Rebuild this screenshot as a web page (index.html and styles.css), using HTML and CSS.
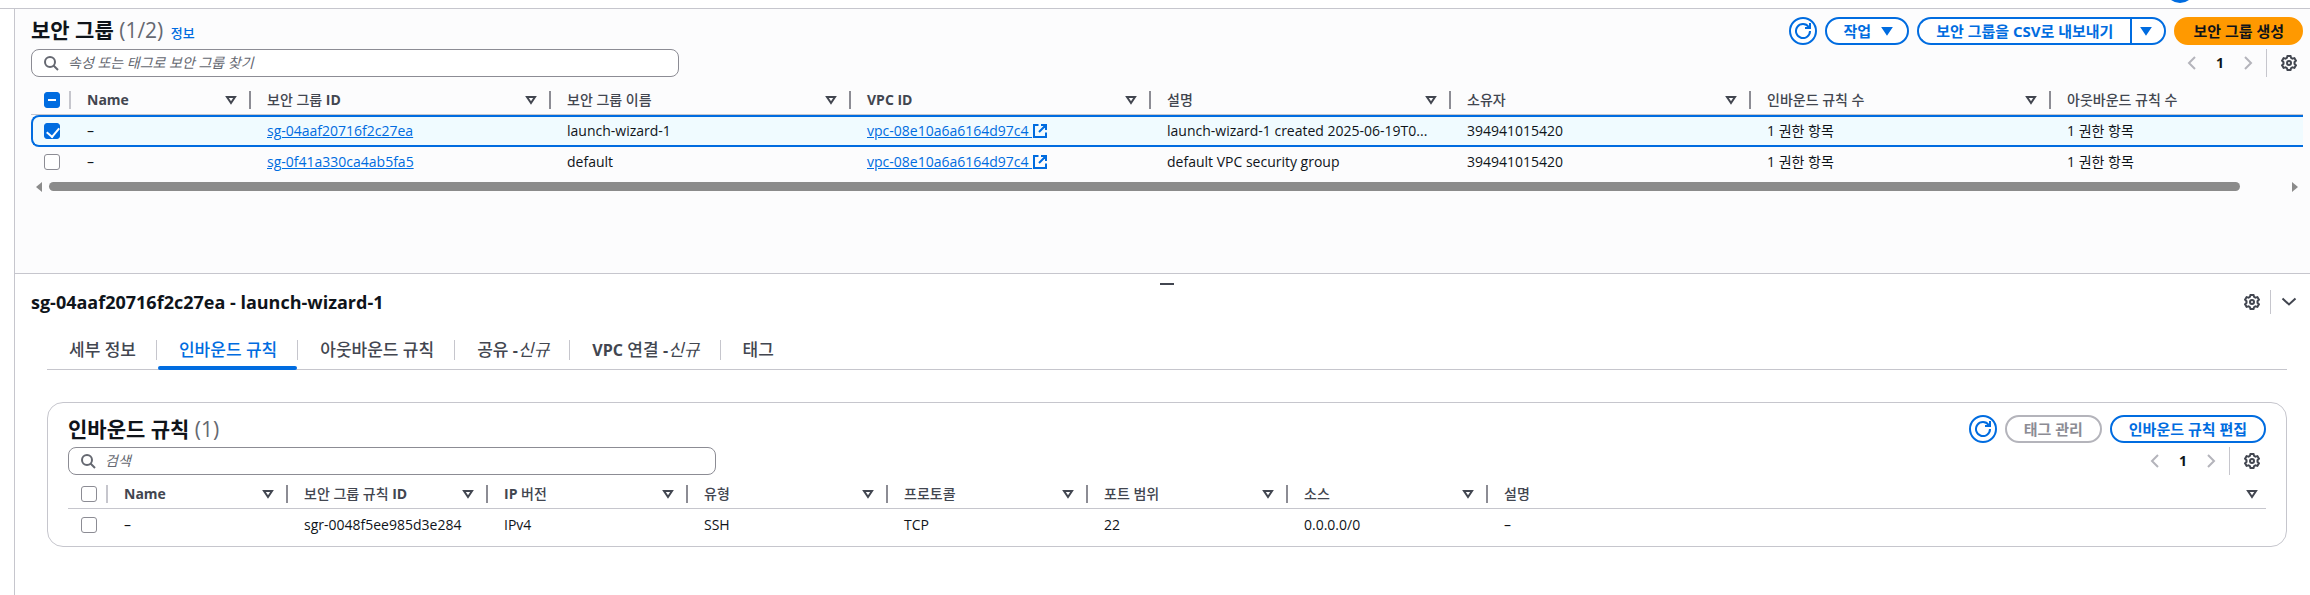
FILE: index.html
```
<!DOCTYPE html>
<html lang="ko">
<head>
<meta charset="utf-8">
<title>보안 그룹</title>
<link rel="stylesheet" href="styles.css">
</head>
<body>
<svg class="sprite" aria-hidden="true">
  <symbol id="refresh" viewBox="0 0 16 16"><path d="M10 5h5V0"/><path d="M15 8a7 7 0 1 1-1.300-4"/></symbol>
  <symbol id="caret" viewBox="0 0 16 16"><path class="solid" d="M4 5h8l-4 6z"/></symbol>
  <symbol id="filter" viewBox="0 0 16 16"><path d="M4 5h8l-4 6z"/></symbol>
  <symbol id="search" viewBox="0 0 16 16"><circle cx="7" cy="7" r="5"/><path d="m15 15-4.500-4.500"/></symbol>
  <symbol id="left" viewBox="0 0 16 16"><path d="M11 2 5 8l6 6"/></symbol>
  <symbol id="right" viewBox="0 0 16 16"><path d="m5 2 6 6-6 6"/></symbol>
  <symbol id="down" viewBox="0 0 16 16"><path d="m1.500 4.500 6.500 6 6.500-6"/></symbol>
  <symbol id="external" viewBox="0 0 16 16"><path d="M9 2h5v5M7 9l7-7M14 9.500V14H2V2h4.500"/></symbol>
  <symbol id="gear" viewBox="0 0 16 16"><path d="M6.500 1h3l.6 1.900 1.300.7 2-.5 1.500 2.600-1.400 1.500v1.600l1.400 1.500-1.500 2.600-2-.5-1.300.7-.6 1.900h-3l-.6-1.900-1.300-.7-2 .5-1.500-2.600 1.400-1.500V7.200L1.100 5.700l1.500-2.600 2 .5 1.300-.7z"/><circle cx="8" cy="8" r="2"/></symbol>
</svg>

<div class="app">
  <header class="topbar"><span class="help-dot"></span></header>
  <main class="shell">
    <section class="groups">
      <div class="head">
        <h1 class="title">보안 그룹 <span class="count">(1/2)</span> <a class="info" href="#">정보</a></h1>
        <div class="actions">
          <button class="btn round" aria-label="새로 고침"><svg class="icon"><use href="#refresh"/></svg></button>
          <button class="btn menu">작업 <svg class="icon"><use href="#caret"/></svg></button>
          <div class="split">
            <button class="btn split-main">보안 그룹을 CSV로 내보내기</button>
            <button class="btn split-more" aria-label="더 보기"><svg class="icon"><use href="#caret"/></svg></button>
          </div>
          <button class="btn primary">보안 그룹 생성</button>
        </div>
      </div>
      <div class="tools">
        <label class="search"><svg class="icon"><use href="#search"/></svg><input type="text" aria-label="보안 그룹 찾기" placeholder="속성 또는 태그로 보안 그룹 찾기"></label>
        <div class="pager">
          <button class="plain off" aria-label="이전"><svg class="icon"><use href="#left"/></svg></button>
          <button class="plain page">1</button>
          <button class="plain off" aria-label="다음"><svg class="icon"><use href="#right"/></svg></button>
          <button class="plain prefs" aria-label="기본 설정"><svg class="icon"><use href="#gear"/></svg></button>
        </div>
      </div>
      <div class="clip">
        <table class="grid wide">
          <colgroup><col class="c-check"><col class="c-name"><col span="7" class="c-wide"></colgroup>
          <thead><tr>
            <th><input class="check some" type="checkbox" aria-label="모두 선택"></th>
            <th><div><span><b>Name</b></span><svg class="icon"><use href="#filter"/></svg></div></th>
            <th><div><span>보안 그룹 <b>ID</b></span><svg class="icon"><use href="#filter"/></svg></div></th>
            <th><div><span>보안 그룹 이름</span><svg class="icon"><use href="#filter"/></svg></div></th>
            <th><div><span><b>VPC ID</b></span><svg class="icon"><use href="#filter"/></svg></div></th>
            <th><div><span>설명</span><svg class="icon"><use href="#filter"/></svg></div></th>
            <th><div><span>소유자</span><svg class="icon"><use href="#filter"/></svg></div></th>
            <th><div><span>인바운드 규칙 수</span><svg class="icon"><use href="#filter"/></svg></div></th>
            <th><div><span>아웃바운드 규칙 수</span></div></th>
          </tr></thead>
          <tbody>
            <tr class="selected">
              <td><input class="check" type="checkbox" checked aria-label="launch-wizard-1 선택"></td>
              <td>–</td><td><a href="#">sg-04aaf20716f2c27ea</a></td><td>launch-wizard-1</td>
              <td><a href="#">vpc-08e10a6a6164d97c4 <svg class="icon"><use href="#external"/></svg></a></td>
              <td>launch-wizard-1 created 2025-06-19T0...</td><td>394941015420</td><td>1 권한 항목</td><td>1 권한 항목</td>
            </tr>
            <tr>
              <td><input class="check" type="checkbox" aria-label="default 선택"></td>
              <td>–</td><td><a href="#">sg-0f41a330ca4ab5fa5</a></td><td>default</td>
              <td><a href="#">vpc-08e10a6a6164d97c4 <svg class="icon"><use href="#external"/></svg></a></td>
              <td>default VPC security group</td><td>394941015420</td><td>1 권한 항목</td><td>1 권한 항목</td>
            </tr>
          </tbody>
        </table>
      </div>
      <div class="scroll"><i class="arrow back"></i><div class="track"><div class="thumb"></div></div><i class="arrow next"></i></div>
    </section>

    <section class="panel">
      <div class="handle"></div>
      <div class="panel-head">
        <h2>sg-04aaf20716f2c27ea - launch-wizard-1</h2>
        <div class="panel-tools">
          <button class="plain" aria-label="기본 설정"><svg class="icon"><use href="#gear"/></svg></button>
          <button class="plain fold" aria-label="닫기"><svg class="icon"><use href="#down"/></svg></button>
        </div>
      </div>
      <div class="tabs" role="tablist">
        <button role="tab">세부 정보</button>
        <button role="tab" class="active" aria-selected="true">인바운드 규칙</button>
        <button role="tab">아웃바운드 규칙</button>
        <button role="tab">공유 <b>-</b><em>신규</em></button>
        <button role="tab"><b>VPC</b> 연결 <b>-</b><em>신규</em></button>
        <button role="tab">태그</button>
      </div>
      <div class="card">
        <div class="head">
          <h2 class="title">인바운드 규칙 <span class="count">(1)</span></h2>
          <div class="actions">
            <button class="btn round" aria-label="새로 고침"><svg class="icon"><use href="#refresh"/></svg></button>
            <button class="btn disabled" disabled>태그 관리</button>
            <button class="btn">인바운드 규칙 편집</button>
          </div>
        </div>
        <div class="tools">
          <label class="search"><svg class="icon"><use href="#search"/></svg><input type="text" aria-label="검색" placeholder="검색"></label>
          <div class="pager">
            <button class="plain off" aria-label="이전"><svg class="icon"><use href="#left"/></svg></button>
            <button class="plain page">1</button>
            <button class="plain off" aria-label="다음"><svg class="icon"><use href="#right"/></svg></button>
            <button class="plain prefs" aria-label="기본 설정"><svg class="icon"><use href="#gear"/></svg></button>
          </div>
        </div>
        <table class="grid">
          <colgroup><col class="c-check"><col class="c-name"><col span="6" class="c-mid"><col></colgroup>
          <thead><tr>
            <th><input class="check" type="checkbox" aria-label="모두 선택"></th>
            <th><div><span><b>Name</b></span><svg class="icon"><use href="#filter"/></svg></div></th>
            <th><div><span>보안 그룹 규칙 <b>ID</b></span><svg class="icon"><use href="#filter"/></svg></div></th>
            <th><div><span><b>IP</b> 버전</span><svg class="icon"><use href="#filter"/></svg></div></th>
            <th><div><span>유형</span><svg class="icon"><use href="#filter"/></svg></div></th>
            <th><div><span>프로토콜</span><svg class="icon"><use href="#filter"/></svg></div></th>
            <th><div><span>포트 범위</span><svg class="icon"><use href="#filter"/></svg></div></th>
            <th><div><span>소스</span><svg class="icon"><use href="#filter"/></svg></div></th>
            <th><div><span>설명</span><svg class="icon"><use href="#filter"/></svg></div></th>
          </tr></thead>
          <tbody><tr>
            <td><input class="check" type="checkbox" aria-label="규칙 선택"></td>
            <td>–</td><td>sgr-0048f5ee985d3e284</td><td>IPv4</td><td>SSH</td><td>TCP</td><td>22</td><td>0.0.0.0/0</td><td>–</td>
          </tr></tbody>
        </table>
      </div>
    </section>
  </main>
</div>
</body>
</html>
```
FILE: styles.css
```
:root {
  --blue: #006ce0;
  --line: #c6c6cd;
  --ink: #0f141a;
  --muted: #424650;
}
* { box-sizing: border-box; }
body {
  margin: 0;
  background: #fff;
  color: var(--ink);
  font: 14px/20px "Open Sans", "Noto Sans CJK KR", sans-serif;
}
h1, h2 { margin: 0; }
b { font-weight: 700; }
button, input { font: inherit; color: inherit; margin: 0; }
button { background: none; border: 0; padding: 0; }
a { color: var(--blue); }
.sprite { position: absolute; width: 0; height: 0; }
.icon {
  width: 16px;
  height: 16px;
  flex: none;
  fill: none;
  stroke: currentColor;
  stroke-width: 2;
  overflow: visible;
}
.solid { fill: currentColor; }

.app { display: flex; flex-direction: column; min-height: 100vh; }
.topbar { height: 9px; border-bottom: 1px solid var(--line); position: relative; }
.help-dot {
  position: absolute;
  right: 115px;
  bottom: 5px;
  width: 30px;
  height: 30px;
  border-radius: 50%;
  background: var(--blue);
}
.shell {
  flex: 1;
  display: flex;
  flex-direction: column;
  margin-left: 14px;
  border-left: 1px solid var(--line);
}
.groups { background: #fcfcfd; padding: 8px 7px 82px 16px; }
.head { display: flex; justify-content: space-between; align-items: center; height: 28px; }
.title { font-size: 21px; line-height: 24px; font-weight: 700; }
.count { font-weight: 400; color: #656871; }
.info { font-size: 13px; font-weight: 500; text-decoration: none; margin-left: 2px; }
.actions { display: flex; gap: 8px; }
.btn {
  display: flex;
  align-items: center;
  gap: 8px;
  height: 28px;
  padding: 0 17px;
  border: 2px solid var(--blue);
  border-radius: 14px;
  background: #fff;
  color: var(--blue);
  font-size: 15px;
  font-weight: 700;
}
.btn.round { width: 28px; padding: 0; justify-content: center; }
.btn.menu { padding-right: 12px; }
.btn.primary { background: #f90; border-color: #f90; color: var(--ink); }
.btn.disabled { border-color: #b4b4bb; color: #8c8c94; }
.split { display: flex; }
.btn.split-main { border-radius: 14px 0 0 14px; border-right: 0; }
.btn.split-more { border-radius: 0 14px 14px 0; padding: 0 10px 0 6px; }

.tools { display: flex; justify-content: space-between; margin-top: 4px; height: 28px; }
.search {
  display: flex;
  align-items: center;
  gap: 9px;
  width: 648px;
  padding: 0 11px;
  border: 1px solid #8c8c94;
  border-radius: 8px;
  background: #fff;
  color: #656871;
}
.search input { flex: 1; border: 0; padding: 0; background: none; outline: 0; }
.search input::placeholder { color: #656871; font-style: italic; opacity: 1; }
.pager { display: flex; align-items: center; }
.plain { display: flex; align-items: center; justify-content: center; color: var(--muted); }
.plain.off { color: #b4b4bb; width: 24px; }
.page { width: 32px; font-weight: 700; color: var(--ink); }
.prefs { margin-left: 6px; height: 28px; padding: 0 6px 0 14px; border-left: 1px solid var(--line); }

.clip { overflow: hidden; margin-top: 8px; }
.grid { border-collapse: separate; border-spacing: 0; table-layout: fixed; width: 100%; }
.grid.wide { width: 2320px; }
.c-check { width: 40px; }
.c-name { width: 180px; }
.c-wide { width: 300px; }
.c-mid { width: 200px; }
.grid th {
  height: 30px;
  padding: 0;
  border-bottom: 1px solid var(--line);
  text-align: left;
  font-weight: 500;
  color: var(--muted);
}
.grid th div {
  display: flex;
  align-items: center;
  justify-content: space-between;
  height: 18px;
  padding: 0 10px 0 16px;
  border-right: 2px solid #8c8c94;
}
.grid th:last-child div { border-right-color: transparent; padding-right: 4px; }
.grid th:first-child { padding-left: 13px; background: linear-gradient(var(--line), var(--line)) right 6px / 2px 18px no-repeat; }
.grid td {
  height: 32px;
  padding: 0 16px;
  border: solid transparent;
  border-width: 2px 0;
  white-space: nowrap;
}
.wide tr:not(.selected) td { height: 30px; }
.grid td:first-child { padding: 0 0 0 13px; }
.grid td .icon { vertical-align: -3px; }
.selected td { background: #f0fbff; border-color: var(--blue); }
.grid .selected td:first-child { border-left-width: 2px; border-radius: 8px 0 0 8px; padding-left: 11px; }
.check {
  appearance: none;
  display: block;
  width: 16px;
  height: 16px;
  border: 1px solid #8c8c94;
  border-radius: 3px;
  background: #fff;
}
.check:checked, .check.some { background: var(--blue); border-color: var(--blue); }
.check:checked::after {
  content: "";
  display: block;
  width: 6px;
  height: 10px;
  margin: 1px 0 0 4px;
  border: solid #fff;
  border-width: 0 2px 2px 0;
  transform: rotate(40deg);
}
.check.some::after { content: ""; display: block; width: 8px; height: 2px; margin: 6px 3px; background: #fff; }

.scroll { display: flex; align-items: center; margin-top: 5px; padding: 0 5px; height: 9px; }
.arrow { border: solid transparent; border-width: 5px 0; }
.back { border-right: 6px solid #8b8b8b; }
.next { border-left: 6px solid #8b8b8b; }
.track { flex: 1; margin: 0 7px; }
.thumb { width: 98%; height: 9px; border-radius: 5px; background: #8b8b8b; }

.panel { flex: 1; border-top: 1px solid var(--line); padding: 9px 7px 0 16px; }
.handle { width: 14px; height: 2px; margin: 0 auto; background: var(--muted); }
.panel-head { display: flex; align-items: center; justify-content: space-between; margin-top: 5px; height: 24px; }
.panel-head h2 { font-size: 18px; line-height: 24px; }
.panel-tools { display: flex; gap: 10px; }
.fold { height: 24px; padding: 0 6px 0 10px; border-left: 1px solid var(--line); }
.tabs { display: flex; align-items: center; height: 40px; margin: 16px 16px 0; border-bottom: 1px solid var(--line); }
.tabs button {
  position: relative;
  height: 39px;
  padding: 0 21px 0 22px;
  font-size: 17px;
  font-weight: 500;
  color: var(--muted);
}
.tabs button:not(:last-child) { background: linear-gradient(var(--line), var(--line)) right center / 1px 20px no-repeat; }
.tabs b { font-size: 16px; }
.tabs em { font-weight: 400; }
.tabs .active { color: var(--blue); }
.tabs .active::after {
  content: "";
  position: absolute;
  inset: auto 1px -1px 1px;
  height: 4px;
  border-radius: 2px;
  background: var(--blue);
}
.card { margin: 32px 16px 0; padding: 12px 20px 5px; border: 1px solid var(--line); border-radius: 16px; }
.card .grid { margin-top: 4px; }
```
